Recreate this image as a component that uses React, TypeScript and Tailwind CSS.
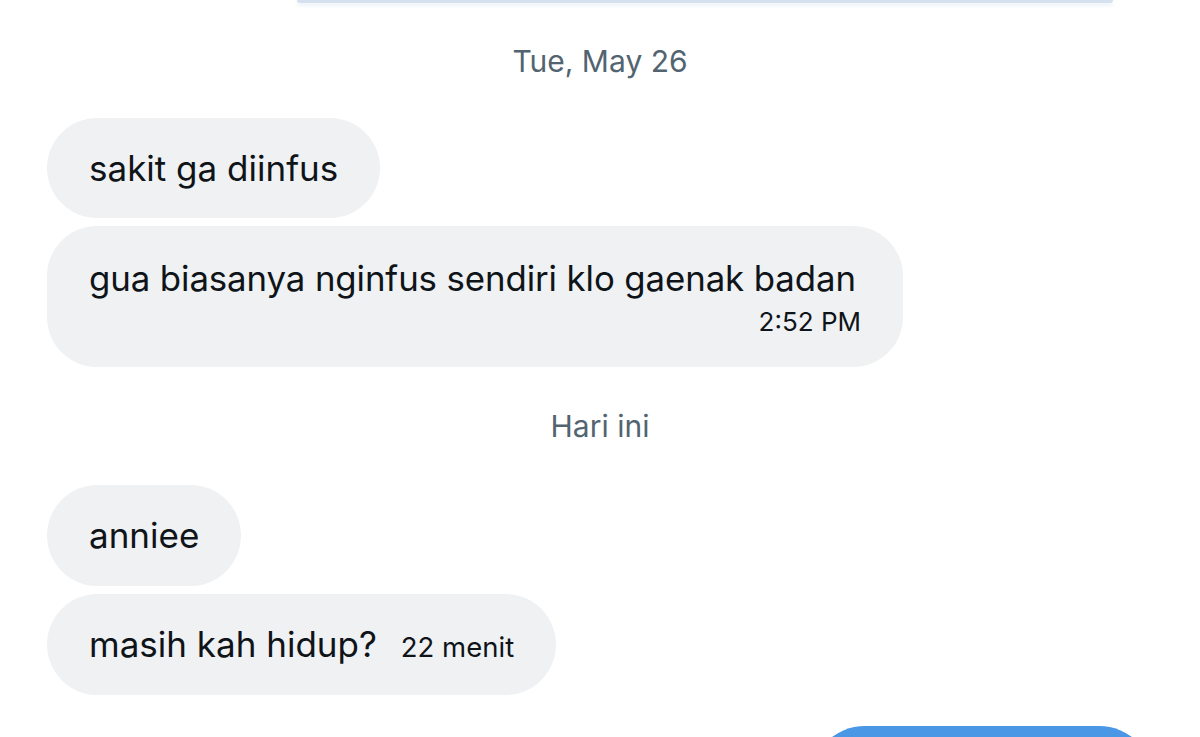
export default function App() {
  return (
    <div
      className="h-[737px] w-[1200px] overflow-hidden bg-white text-[#0f1419]"
      style={{ fontFamily: "Inter, 'Noto Sans', sans-serif" }}
    >
      {/* bottom edge of the previous card */}
      <div className="ml-[297px] h-[3px] w-[816px] rounded-b-full bg-[#d5e1ee] shadow-[0_2px_4px_rgba(180,200,225,0.35)]" />

      <p className="mt-[38px] text-center text-[30px] leading-[40px] text-[#536471]">
        Tue, May 26
      </p>

      <div className="ml-[47px] mt-[37px] flex flex-col items-start gap-2">
        <div className="flex h-[100px] items-center rounded-full bg-[#f0f1f3] px-[42px] text-[35px]">
          sakit ga diinfus
        </div>
        <div className="flex h-[141px] w-[856px] flex-col items-end rounded-[50px] bg-[#f0f1f3] px-[42px] pt-[30px]">
          <span className="self-start whitespace-nowrap text-[34.8px] leading-[44px] tracking-[-0.1px]">
            gua biasanya nginfus sendiri klo gaenak badan
          </span>
          <span className="mt-[7px] text-[26px] leading-[30px]">2:52 PM</span>
        </div>
      </div>

      <p className="mt-[39px] text-center text-[30px] leading-[40px] text-[#536471]">
        Hari ini
      </p>

      <div className="ml-[47px] mt-[39px] flex flex-col items-start gap-2">
        <div className="flex h-[101px] items-center rounded-full bg-[#f0f1f3] px-[42px] text-[35px]">
          anniee
        </div>
        <div className="flex h-[101px] items-center gap-[24px] rounded-full bg-[#f0f1f3] px-[42px]">
          <span className="text-[35px]">masih kah hidup?</span>
          <span className="pt-[6px] text-[27.5px]">22 menit</span>
        </div>
      </div>

      <div className="ml-[810px] mt-[31px] h-[60px] w-[344px] rounded-t-[55px] bg-[#4a97e5]" />
    </div>
  );
}
